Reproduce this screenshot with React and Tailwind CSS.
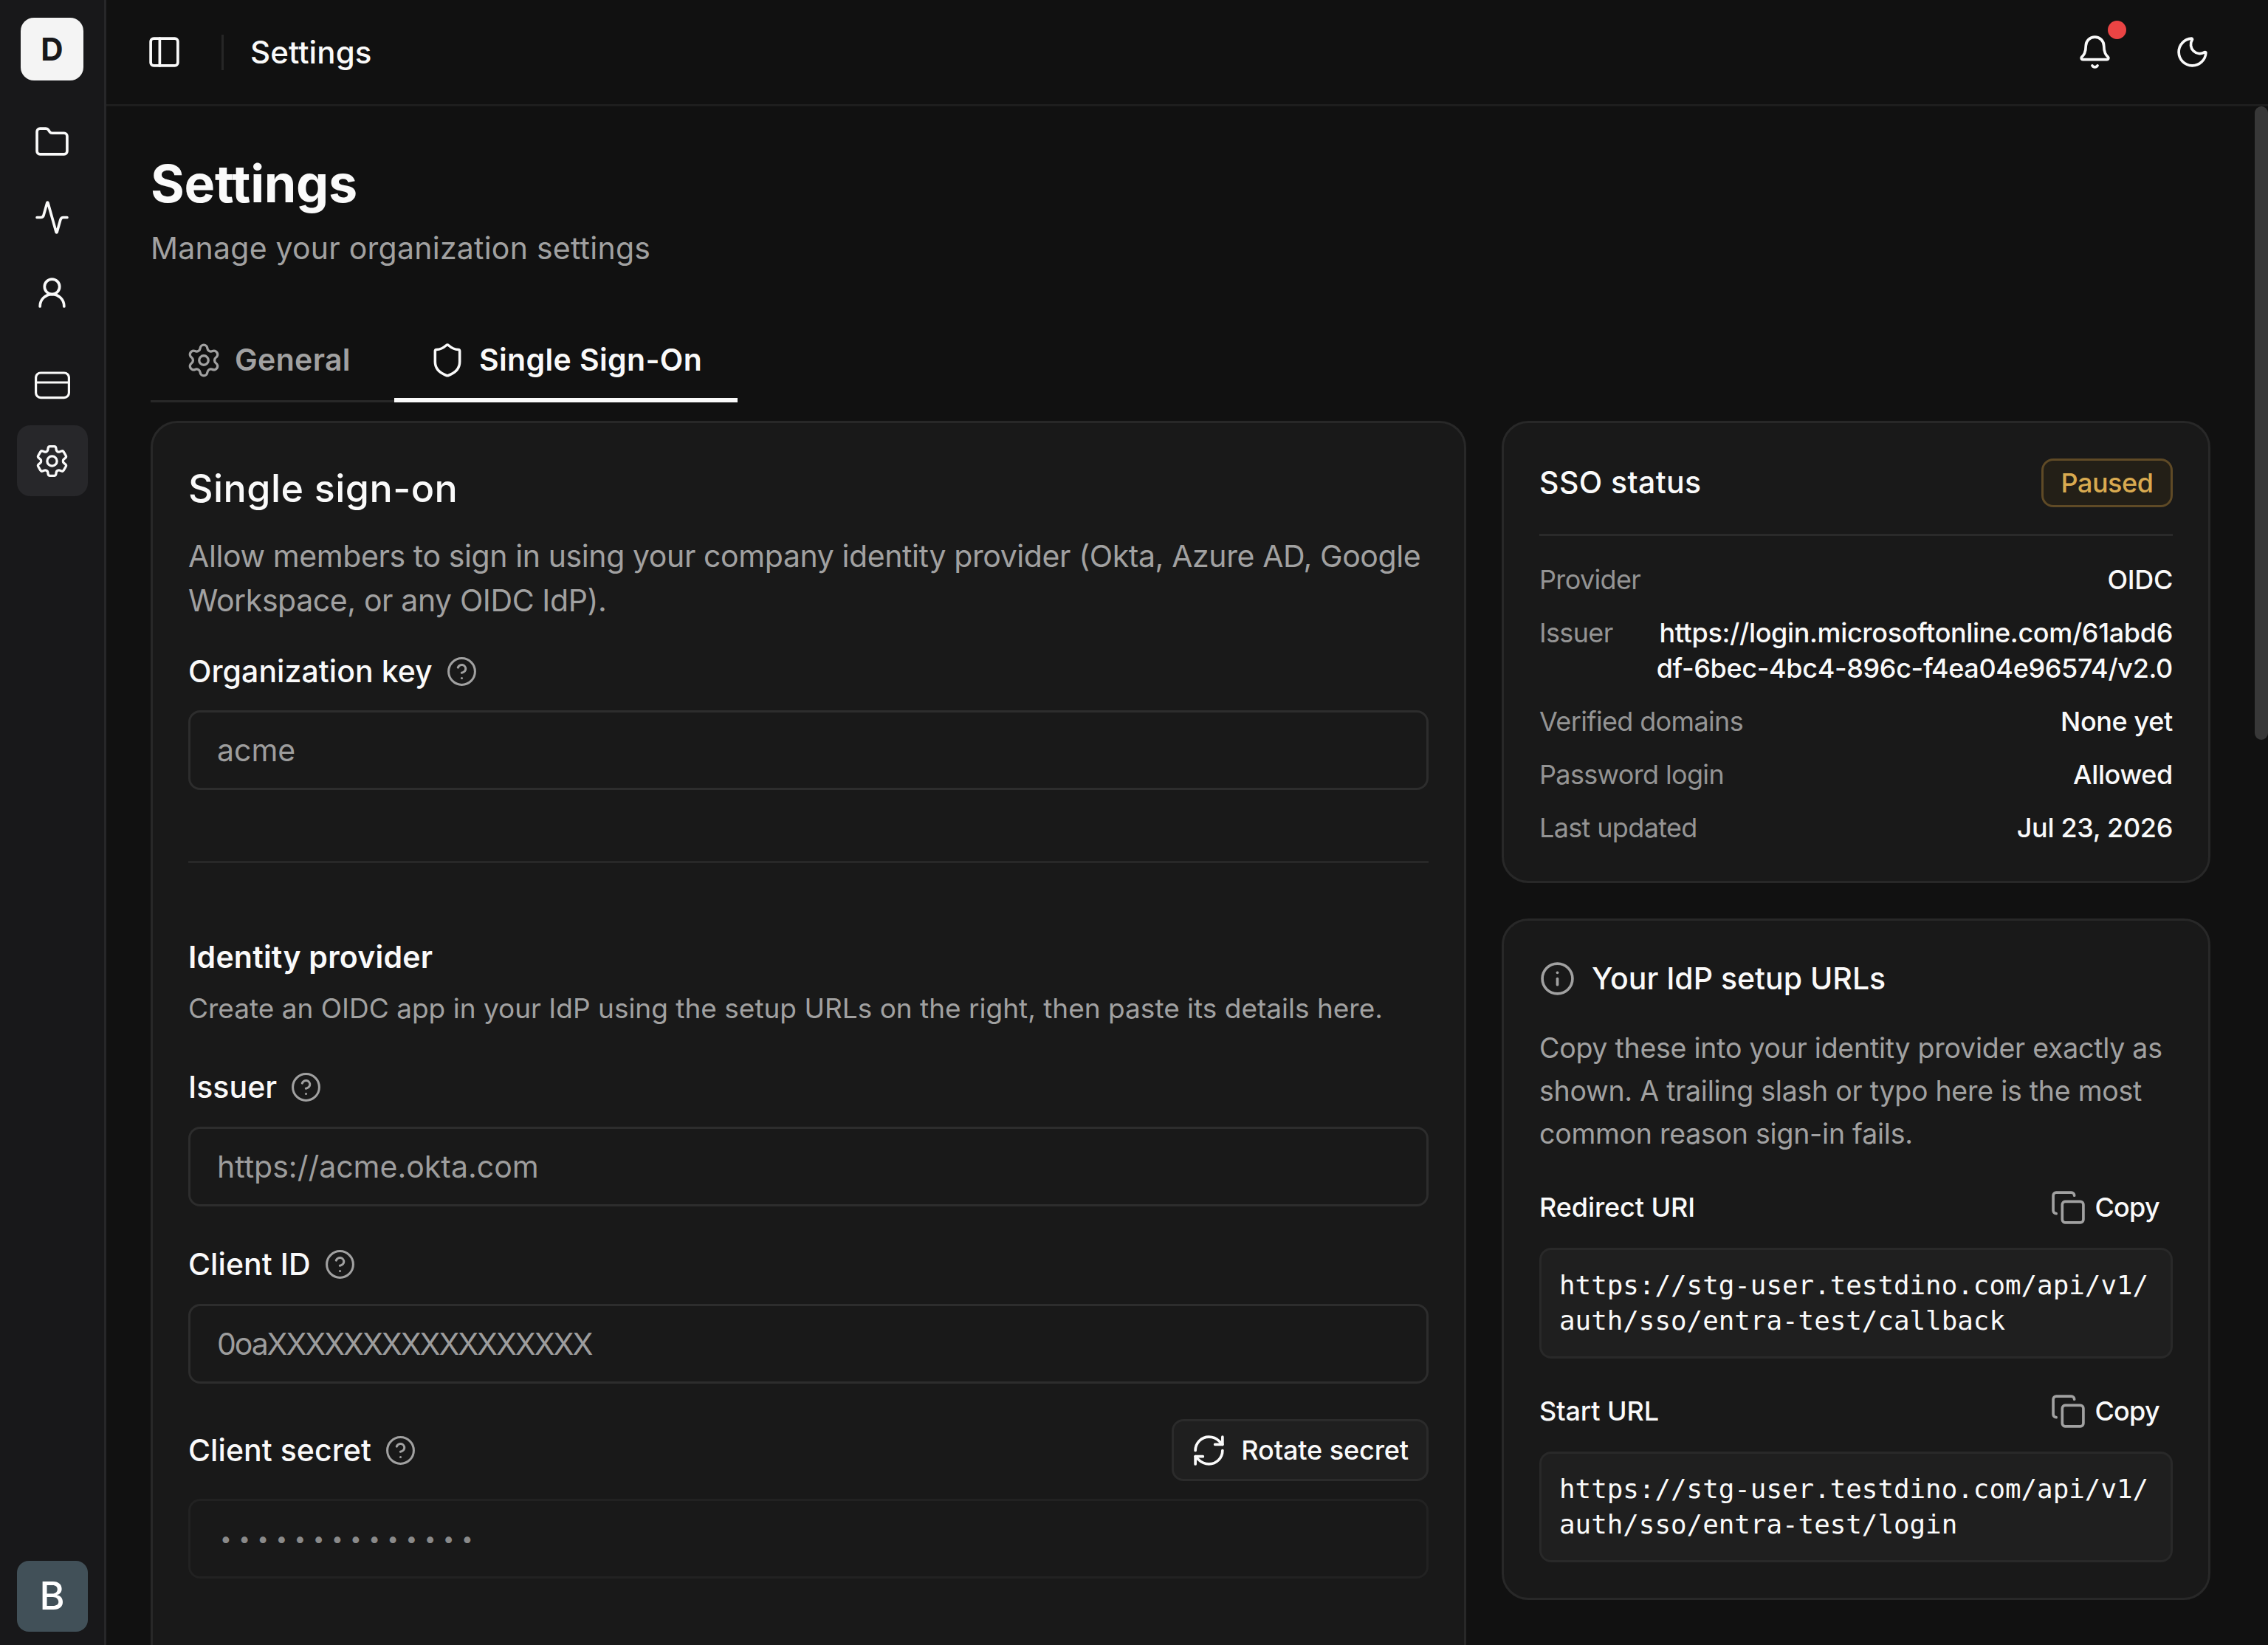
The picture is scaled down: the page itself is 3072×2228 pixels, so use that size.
import React from "react";
import {
  Activity,
  Bell,
  CircleQuestionMark,
  Copy,
  Folder,
  Info,
  Moon,
  PanelLeft,
  RefreshCw,
  Settings,
  Shield,
  UserRound,
} from "lucide-react";
import { HiOutlineCog6Tooth } from "react-icons/hi2";

const statusRows = [
  { label: "Provider", value: "OIDC" },
  {
    label: "Issuer",
    value: "https://login.microsoftonline.com/61abd6df-6bec-4bc4-896c-f4ea04e96574/v2.0",
  },
  { label: "Verified domains", value: "None yet" },
  { label: "Password login", value: "Allowed" },
  { label: "Last updated", value: "Jul 23, 2026" },
];

const CardIcon = () => (
  <svg width="50" height="50" viewBox="0 0 50 50" fill="none" stroke="currentColor" strokeWidth="3.2">
    <rect x="2.6" y="8" width="44.8" height="33.6" rx="6.5" />
    <path d="M2.6 21h44.8" />
  </svg>
);

const NavItem = ({ active, children }) => (
  <a
    href="#"
    className={`flex size-24 items-center justify-center rounded-[18px] text-[#fafafa] ${
      active ? "bg-[#27272a]" : ""
    }`}
  >
    {children}
  </a>
);

const Sidebar = () => (
  <aside className="flex w-36 shrink-0 flex-col items-center border-r-3 border-[#272729] bg-[#18181a] pt-6 pb-[18px]">
    <div className="flex size-[85px] items-center justify-center rounded-[18px] bg-[#f4f4f4] text-[42px] font-bold text-[#18181a]">
      D
    </div>
    <nav className="mt-[35px] flex flex-col gap-1.5">
      <NavItem>
        <Folder size={49} strokeWidth={1.8} />
      </NavItem>
      <NavItem>
        <Activity size={49} strokeWidth={1.8} />
      </NavItem>
      <NavItem>
        <UserRound size={49} strokeWidth={1.8} />
      </NavItem>
    </nav>
    <nav className="mt-[30px] flex flex-col gap-1.5">
      <NavItem>
        <CardIcon />
      </NavItem>
      <NavItem active>
        <HiOutlineCog6Tooth size={53} />
      </NavItem>
    </nav>
    <div className="mt-auto flex size-24 items-center justify-center rounded-[16px] bg-[#415058] text-[52px] font-medium text-white">
      B
    </div>
  </aside>
);

const Header = () => (
  <header className="flex h-36 shrink-0 items-center border-b-3 border-[#1e1e1e] pr-[78px] pl-[54px]">
    <PanelLeft size={49} strokeWidth={1.8} />
    <div className="ml-[53px] h-12 w-[3px] bg-[#262626]" />
    <span className="ml-[36px] text-[42px] font-medium tracking-[0.1px]">Settings</span>
    <div className="ml-auto flex items-center gap-[83px]">
      <div className="relative">
        <Bell size={49} strokeWidth={1.8} />
        <span className="absolute -top-[18px] left-[42px] size-[25px] rounded-full bg-[#ea4444]" />
      </div>
      <Moon size={49} strokeWidth={1.8} />
    </div>
  </header>
);

const FieldLabel = ({ children }) => (
  <label className="flex h-[60px] items-center gap-[18px] text-[41px] leading-[60px] font-medium tracking-[0.05px]">
    {children}
    <CircleQuestionMark size={43} strokeWidth={1.7} className="text-[#a1a1a1]" />
  </label>
);

const Field = ({ placeholder, className = "" }) => (
  <input
    placeholder={placeholder}
    className={`block h-[108px] w-full rounded-[16px] border-3 border-[#2d2d2d] bg-transparent px-9 text-[41px] placeholder:text-[#9d9d9d] ${className}`}
  />
);

const SignOnCard = () => (
  <section className="h-[1800px] w-[1782px] shrink-0 rounded-[36px] border-3 border-[#282828] bg-[#191919] px-12 pt-[53px]">
    <h2 className="text-[52px] leading-[72px] font-medium tracking-[0.45px]">Single sign-on</h2>
    <p className="mt-[25px] text-[41px] leading-[60px] tracking-[-0.4px] text-[#a1a1a1]">
      Allow members to sign in using your company identity provider (Okta, Azure AD, Google
      Workspace, or any OIDC IdP).
    </p>
    <div className="mt-[36px]">
      <FieldLabel>Organization key</FieldLabel>
      <Field placeholder="acme" className="mt-[23px]" />
    </div>
    <hr className="mt-24 border-t-3 border-[#282828]" />
    <h3 className="mt-[97px] text-[41px] leading-[60px] font-semibold tracking-[0.23px]">
      Identity provider
    </h3>
    <p className="mt-3 text-[37px] leading-[56px] whitespace-nowrap text-[#a1a1a1]">
      Create an OIDC app in your IdP using the setup URLs on the right, then paste its details here.
    </p>
    <div className="mt-12">
      <FieldLabel>Issuer</FieldLabel>
      <Field placeholder="https://acme.okta.com" className="mt-6" />
    </div>
    <div className="mt-12">
      <FieldLabel>Client ID</FieldLabel>
      <Field placeholder="0oaXXXXXXXXXXXXXXXXX" className="mt-6 tracking-[-2.1px]" />
    </div>
    <div className="mt-12">
      <div className="flex items-center justify-between">
        <FieldLabel>Client secret</FieldLabel>
        <button className="flex h-[84px] w-[348px] items-center justify-between rounded-[16px] border-3 border-[#2b2b2b] bg-[#1f1f1f] pr-[24px] pl-[23px] text-[36px] font-medium tracking-[-0.1px]">
          <RefreshCw size={49} strokeWidth={1.8} />
          Rotate secret
        </button>
      </div>
      <input
        disabled
        placeholder="••••••••••••••"
        className="mt-6 block h-[108px] w-full rounded-[16px] border-3 border-[#222222] bg-transparent pr-9 pl-10 text-[28px] tracking-[9.4px] placeholder:text-[#8a8a8a]"
      />
    </div>
  </section>
);

const StatusCard = () => (
  <section className="rounded-[36px] border-3 border-[#282828] bg-[#191919] p-12">
    <div className="flex h-[66px] items-center justify-between">
      <h2 className="text-[41px] font-medium tracking-[0.4px]">SSO status</h2>
      <span className="flex h-[66px] w-[178px] items-center justify-center rounded-[16px] border-3 border-[#5f4a26] bg-[#231f17] text-[36px] font-medium tracking-[-0.5px] text-[#d9aa50]">
        Paused
      </span>
    </div>
    <hr className="mt-9 border-t-3 border-[#2a2a2a]" />
    <dl className="mt-[35px] flex flex-col gap-6 text-[36px] leading-[48px]">
      {statusRows.map((row) => (
        <div key={row.label} className="flex justify-between">
          <dt className="shrink-0 tracking-[-0.65px] text-[#949494]">{row.label}</dt>
          <dd className="w-[705px] text-right font-medium tracking-[-0.35px] break-all">{row.value}</dd>
        </div>
      ))}
    </dl>
  </section>
);

const UrlBlock = ({ label, lines, className = "" }) => (
  <div className={className}>
    <div className="flex h-[72px] items-center justify-between pr-[18px] text-[36px] font-medium tracking-[-0.1px]">
      {label}
      <button className="flex items-center gap-[11px] tracking-[-0.7px]">
        <Copy size={49} strokeWidth={1.8} className="text-[#a1a1a1]" />
        Copy
      </button>
    </div>
    <code className="mt-[19px] block h-[150px] rounded-[16px] border-3 border-[#292929] bg-[#1f1f1f] p-6 font-['DejaVu_Sans_Mono',monospace] text-[35.85px] leading-[48px]">
      {lines.map((line) => (
        <span key={line} className="block">
          {line}
        </span>
      ))}
    </code>
  </div>
);

const SetupCard = () => (
  <section className="rounded-[36px] border-3 border-[#282828] bg-[#191919] p-12">
    <h2 className="flex h-[60px] items-center gap-[22px] pt-px text-[41px] font-medium">
      <Info size={49} strokeWidth={1.8} className="text-[#a1a1a1]" />
      Your IdP setup URLs
    </h2>
    <p className="mt-9 text-[37.5px] leading-[58px] tracking-[-0.25px] whitespace-nowrap text-[#a1a1a1]">
      Copy these into your identity provider exactly as
      <br />
      shown. A trailing slash or typo here is the most
      <br />
      common reason sign-in fails.
    </p>
    <UrlBlock
      className="mt-[34px]"
      label="Redirect URI"
      lines={["https://stg-user.testdino.com/api/v1/", "auth/sso/entra-test/callback"]}
    />
    <UrlBlock
      className="mt-[35px]"
      label="Start URL"
      lines={["https://stg-user.testdino.com/api/v1/", "auth/sso/entra-test/login"]}
    />
  </section>
);

const Tabs = () => (
  <div className="mt-[63px] flex h-[116px] w-fit gap-[11px] border-b-3 border-[#282828] text-[41px] font-semibold">
    <button className="flex h-[116px] w-[319px] items-center gap-[17px] pt-0.5 pl-[47px] tracking-[0.35px] text-[#a1a1a1]">
      <Settings size={50} strokeWidth={1.6} />
      General
    </button>
    <button className="flex h-[116px] w-[465px] items-center gap-[18px] border-b-6 border-[#fafafa] pt-2 pl-[47px] tracking-[0.35px]">
      <Shield size={50} strokeWidth={1.7} />
      Single Sign-On
    </button>
  </div>
);

const App = () => {
  return (
    <div className="flex h-[2228px] w-[3072px] overflow-hidden bg-[#111111] font-['Inter',sans-serif] text-[#fafafa]">
      <Sidebar />
      <div className="flex min-w-0 flex-1 flex-col">
        <Header />
        <div className="flex min-h-0 flex-1">
          <main className="min-w-0 flex-1 overflow-hidden px-[60px] pt-[63px]">
            <h1 className="text-[70px] leading-[84px] font-bold tracking-[-0.3px]">Settings</h1>
            <p className="mt-[15px] text-[41px] leading-[60px] tracking-[0.24px] text-[#a1a1a1]">
              Manage your organization settings
            </p>
            <Tabs />
            <div className="mt-[25px] flex items-start gap-12">
              <SignOnCard />
              <div className="flex w-[960px] shrink-0 flex-col gap-12">
                <StatusCard />
                <SetupCard />
              </div>
            </div>
          </main>
          <div className="w-[18px] shrink-0">
            <div className="h-[858px] rounded-full bg-[#383838]" />
          </div>
        </div>
      </div>
    </div>
  );
};

export default App;
